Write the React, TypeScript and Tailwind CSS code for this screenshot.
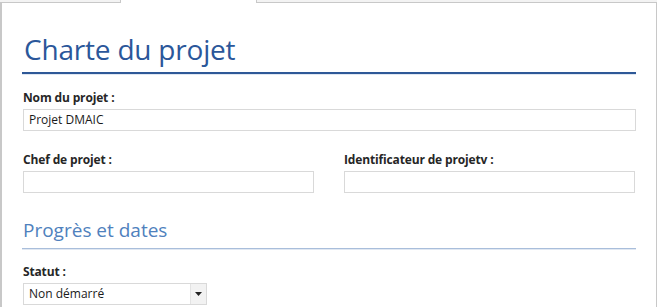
import React from "react";

const font = { fontFamily: '"Open Sans", "Noto Sans", sans-serif' };

function Label({ children }: { children: React.ReactNode }) {
  return <div className="text-[12px] leading-[16px] font-bold text-[#262626] tracking-[-0.15px]">{children}</div>;
}

function Input({ value, className = "" }: { value?: string; className?: string }) {
  return (
    <div className={`h-[22px] border border-[#d9d9d9] bg-white px-[5px] text-[12px] leading-[20px] text-[#1a1a1a] ${className}`}>
      {value}
    </div>
  );
}

export default function App() {
  return (
    <div className="w-[658px] h-[307px] bg-white overflow-hidden" style={font}>
      <div className="flex h-[3px]">
        <div className="w-[121px] bg-[#f3f3f3] border-b border-r border-[#c8c8c8]" />
        <div className="w-[135px] bg-white" />
        <div className="flex-1 bg-[#f3f3f3] border-b border-l border-[#c8c8c8] mr-[1px]" />
      </div>
      <div className="h-[304px] border-l-2 border-r border-[#c8c8c8] mr-[1px] pl-[21px] pr-[20px]">
        <div className="pt-[27px] text-[28px] leading-[38px] text-[#2b579a] pl-[1px] tracking-[-0.2px]">Charte du projet</div>
        <div className="mt-[4px] h-[2px] bg-[#2e5897] border-b border-[#dfe7f2] box-content -ml-[1px]" />
        <div className="mt-[15px]">
          <Label>Nom du projet :</Label>
          <Input value="Projet DMAIC" className="mt-[3px]" />
        </div>
        <div className="mt-[21px] flex gap-[30px]">
          <div className="w-[291px]">
            <Label>Chef de projet :</Label>
            <Input className="mt-[3px]" />
          </div>
          <div className="w-[291px]">
            <Label>Identificateur de projetv :</Label>
            <Input className="mt-[3px]" />
          </div>
        </div>
        <div className="mt-[23px] text-[19px] leading-[28px] text-[#4f81bd]">Progrès et dates</div>
        <div className="mt-[4px] h-[1px] bg-[#a9bedb] border-b border-[#e1e8f2] box-content -ml-[1px]" />
        <div className="mt-[14px]">
          <Label>Statut :</Label>
          <div className="mt-[3px] w-[184px] h-[22px] border border-[#d9d9d9] flex">
            <div className="flex-1 px-[5px] text-[12px] leading-[20px] text-[#1a1a1a]">Non démarré</div>
            <div className="w-[16px] bg-[#f2f2f2] border-l border-[#e3e3e3] flex items-center justify-center">
              <svg width="7" height="4" viewBox="0 0 7 4"><path d="M0 0h7L3.5 4z" fill="#222" /></svg>
            </div>
          </div>
        </div>
      </div>
    </div>
  );
}
